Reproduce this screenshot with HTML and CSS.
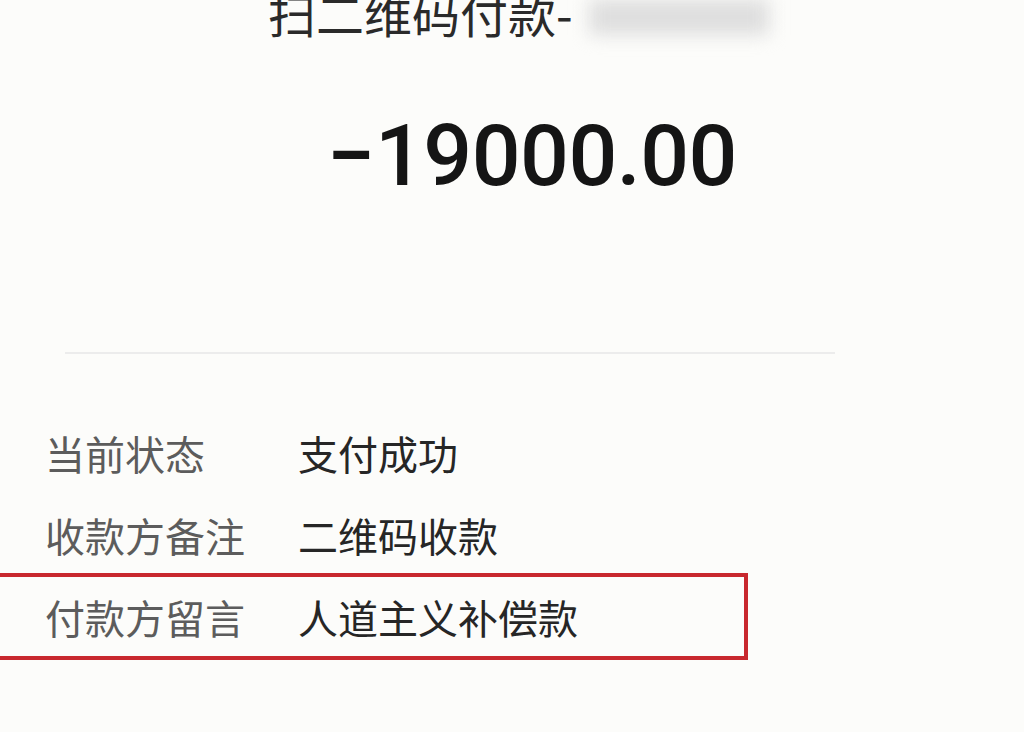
FILE: index.html
```html
<!DOCTYPE html>
<html lang="zh-CN">
<head>
  <meta charset="UTF-8">
  <title>账单详情</title>
  <link rel="stylesheet" href="styles.css">
</head>
<body>
  <div class="bill">
    <div class="title">扫二维码付款-<span class="masked"></span></div>
    <div class="amount">−19000.00</div>
    <div class="divider"></div>
    <div class="rows">
      <div class="row">
        <span class="label">当前状态</span>
        <span class="value">支付成功</span>
      </div>
      <div class="row">
        <span class="label">收款方备注</span>
        <span class="value">二维码收款</span>
      </div>
      <div class="row marked">
        <span class="label">付款方留言</span>
        <span class="value">人道主义补偿款</span>
      </div>
    </div>
  </div>
</body>
</html>
```

FILE: styles.css
```css
body {
  margin: 0;
  background: #fcfcfa;
  font-family: "Noto Sans CJK SC", "Noto Sans", sans-serif;
  overflow: hidden;
}
.bill {
  width: 1024px;
  height: 732px;
}
.title {
  margin-top: -12px;
  padding-left: 268px;
  font-size: 48px;
  line-height: 48px;
  color: #2a2a2a;
  white-space: nowrap;
}
.masked {
  display: inline-block;
  width: 180px;
  height: 36px;
  margin-left: 16px;
  vertical-align: -2px;
  background: #dedede;
  filter: blur(9px);
}
.amount {
  margin-top: 77px;
  padding-left: 327px;
  font-family: Roboto, "Noto Sans", sans-serif;
  font-weight: 500;
  font-size: 86px;
  line-height: 86px;
  letter-spacing: -0.5px;
  color: #151515;
}
.divider {
  margin: 153px 0 0 65px;
  width: 770px;
  height: 2px;
  background: #ececec;
}
.rows {
  margin-top: 58px;
}
.row {
  display: flex;
  align-items: center;
  box-sizing: border-box;
  width: 748px;
  height: 82px;
  padding-left: 45px;
  font-size: 40px;
  line-height: 40px;
}
.label {
  width: 253px;
  color: #5c5c5c;
}
.value {
  color: #262626;
}
.row.marked {
  margin-top: -3px;
  height: 87px;
  border: 4px solid #c8282e;
  border-left: none;
}
```
